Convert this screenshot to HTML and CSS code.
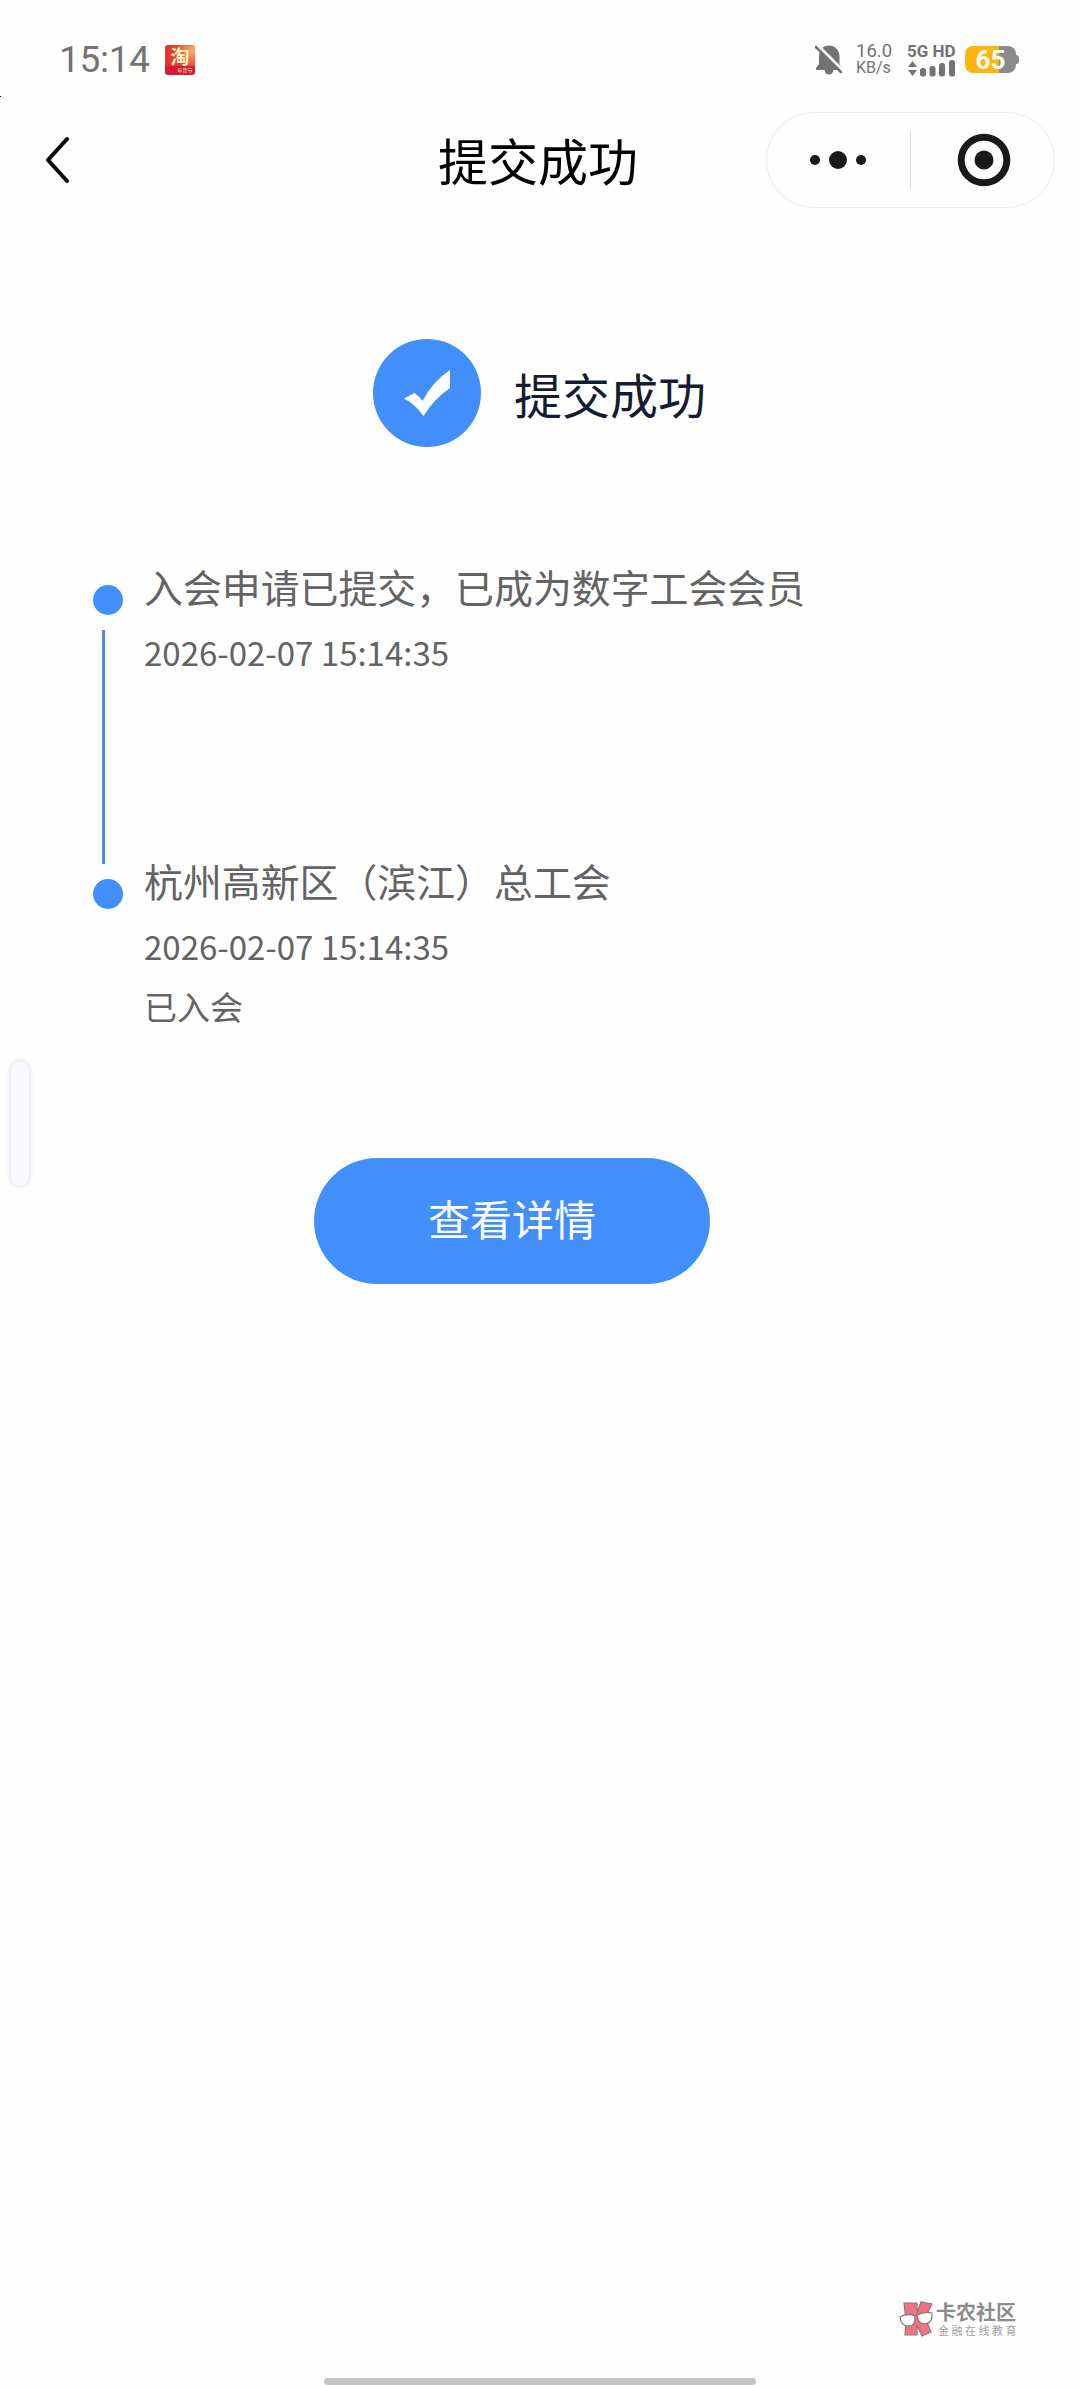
FILE: index.html
```html
<!DOCTYPE html>
<html lang="zh-CN">
<head>
<meta charset="utf-8">
<title>提交成功</title>
<link rel="stylesheet" href="styles.css">
</head>
<body>
<div class="screen">
  <div class="status-bar">
    <span class="clock">15:14</span>
    <div class="app-badge">
      <span class="app-name">淘</span>
      <span class="app-tag">年货节</span>
    </div>
    <div class="indicators">
      <svg class="bell" width="28" height="32" viewBox="0 0 28 32">
        <path d="M4 13C4 6 8 1.500 14 1.500S24.500 6 24.500 13V20L27 25V26H18.500C18 29 16.500 30.500 14 30.500S10 29 9.500 26H1V24L4 20Z" fill="#737373"/>
        <path d="M2 .5L30 28.500" stroke="#fefefe" stroke-width="3"/>
        <path d="M.8 3L26 28.200" stroke="#737373" stroke-width="2.600" stroke-linecap="round"/>
      </svg>
      <div class="speed"><span>16.0</span><span class="unit">KB/s</span></div>
      <div class="network">
        <span>5G HD</span>
        <svg width="48" height="17" viewBox="0 0 48 17" fill="#737373">
          <path d="M1 7L5.500 1L10 7ZM1 10H10L5.500 16Z"/>
          <rect x="13" y="8" width="6" height="8.500" rx="2.500"/>
          <rect x="22.500" y="6" width="6" height="10.500" rx="2.500"/>
          <rect x="32" y="3" width="6" height="13.500" rx="2.500"/>
          <rect x="42" y="0" width="6" height="16.500" rx="2.500"/>
        </svg>
      </div>
      <div class="battery"><span class="level">65</span><span class="nub"></span></div>
    </div>
    <span class="speck"></span>
  </div>

  <header class="nav">
    <svg class="back" width="30" height="50" viewBox="0 0 30 50"><path d="M24 4L5 25L24 46" fill="none" stroke="#000" stroke-width="4" stroke-linejoin="round" stroke-linecap="round"/></svg>
    <h1 class="nav-title">提交成功</h1>
    <div class="capsule">
      <svg class="more" width="60" height="24" viewBox="0 0 60 24" fill="#191919"><circle cx="7" cy="12" r="5"/><circle cx="30" cy="12" r="9"/><circle cx="53" cy="12" r="5"/></svg>
      <span class="divider"></span>
      <svg class="close" width="54" height="54" viewBox="0 0 54 54"><circle cx="27" cy="27" r="22.800" fill="none" stroke="#191919" stroke-width="7"/><circle cx="27" cy="27" r="9.500" fill="#191919"/></svg>
    </div>
  </header>

  <main>
    <section class="result">
      <svg width="108" height="108" viewBox="0 0 108 108"><circle cx="54" cy="54" r="54" fill="#428ffc"/><path d="M31 59.500L41.500 54Q46 57 49.500 62Q60 42 77 31V49Q61 60 50.500 77Q42 65 31 59.500Z" fill="#fff"/></svg>
      <span>提交成功</span>
    </section>

    <ol class="timeline">
      <li class="step">
        <div class="rail"><span class="dot"></span><span class="line"></span></div>
        <div class="info">
          <p class="step-title">入会申请已提交，已成为数字工会会员</p>
          <p class="step-time">2026-02-07 15:14:35</p>
        </div>
      </li>
      <li class="step">
        <div class="rail"><span class="dot"></span></div>
        <div class="info">
          <p class="step-title">杭州高新区（滨江）总工会</p>
          <p class="step-time">2026-02-07 15:14:35</p>
          <p class="step-state">已入会</p>
        </div>
      </li>
    </ol>

    <button class="detail-button" type="button">查看详情</button>
  </main>

  <div class="side-handle"></div>

  <footer class="footer">
    <div class="brand">
      <svg width="35" height="36" viewBox="0 0 35 36" stroke="#8b7776" stroke-width="1.200">
        <path d="M5 2H18V12L22 1L33 3L26 17L32 31L23 35L18 24V34H6L7 20Z" fill="#f0747f"/>
        <path d="M1 16Q8 12 16 15Q17 25 9 25Q2 25 1 16ZM18 14Q26 10 33 12Q34 22 26 23Q19 23 18 14Z" fill="#fff"/>
        <path d="M16 15L18 14" fill="none"/>
      </svg>
      <div class="brand-text"><span class="brand-name">卡农社区</span><span class="brand-sub">金融在线教育</span></div>
    </div>
    <div class="home-bar"></div>
  </footer>
</div>
</body>
</html>
```
FILE: styles.css
```css
* { box-sizing: border-box; }
body {
  margin: 0;
  background: #fefefe;
  font-family: "Noto Sans CJK SC", sans-serif;
}
svg { display: block; flex: none; }
p, h1, ol { margin: 0; padding: 0; }
.screen {
  position: relative;
  display: flex;
  flex-direction: column;
  width: 1080px;
  height: 2388px;
  overflow: hidden;
}

/* System status bar */
.status-bar {
  position: relative;
  display: flex;
  align-items: center;
  height: 112px;
  padding: 7px 61px 0 59px;
  color: #737373;
  font-family: Roboto, sans-serif;
}
.clock {
  width: 106px;
  font-size: 37px;
  line-height: 40px;
  letter-spacing: -.3px;
}
.app-badge {
  display: flex;
  flex-direction: column;
  align-items: center;
  width: 30px;
  height: 30px;
  border-radius: 3px;
  background: linear-gradient(to top, #d51c35 9px, transparent 9px), radial-gradient(circle at 90% 20%, #f7b070, #e8442c 45%, #dc2434);
  font-family: "Noto Sans CJK SC", sans-serif;
  color: #fff0c4;
}
.app-name { font-size: 19px; line-height: 21px; font-weight: 700; }
.app-tag { font-size: 5px; line-height: 8px; padding-left: 10px; white-space: nowrap; }
.indicators {
  display: flex;
  align-items: center;
  height: 34px;
  margin-left: auto;
}
.bell { margin-right: 13px; }
.speed {
  display: flex;
  flex-direction: column;
  width: 51px;
  font-size: 18.500px;
  line-height: 17px;
}
.unit { font-size: 16px; line-height: 16px; }
.network {
  display: flex;
  flex-direction: column;
  gap: 1px;
  width: 58px;
  font-size: 17px;
  line-height: 16px;
  font-weight: 700;
  white-space: nowrap;
}
.battery { display: flex; align-items: center; }
.level {
  width: 51px;
  height: 27px;
  border-radius: 8px;
  background: linear-gradient(to right, #fdb50d 34px, #8a8a8a 34px);
  color: #fff;
  font-size: 26px;
  line-height: 29px;
  font-weight: 700;
  text-align: center;
}
.nub { width: 3px; height: 9px; border-radius: 0 3px 3px 0; background: #8a8a8a; }
.speck { position: absolute; left: 0; top: 96px; width: 1px; height: 1px; background: #000; }

/* Navigation */
.nav {
  display: grid;
  grid-template-columns: 395px 219px 1fr;
  align-items: center;
  height: 96px;
  padding: 0 25px 0 43px;
}
.nav-title {
  padding-bottom: 2px;
  font-size: 50px;
  line-height: 72px;
  font-weight: 400;
  color: #000;
}
.capsule {
  display: flex;
  align-items: center;
  justify-self: end;
  width: 289px;
  height: 96px;
  border: 1.500px solid #ececec;
  border-radius: 48px;
}
.more { margin-left: 41px; }
.divider { width: 1px; height: 58px; margin-left: 42px; background: #dedede; }
.close { margin-left: 46px; }

/* Result heading */
.result {
  display: flex;
  align-items: center;
  gap: 33px;
  margin: 131px 0 0 373px;
  font-size: 48px;
  line-height: 70px;
  color: #141c33;
}

/* Progress timeline */
.timeline { margin: 116px 0 0 93px; list-style: none; }
.step { display: flex; gap: 21px; height: 294px; }
.rail { width: 30px; padding-top: 22px; }
.dot { display: block; width: 30px; height: 30px; border-radius: 50%; background: #428ffc; }
.line { display: block; width: 3px; height: 234px; margin: 15px 0 0 9px; background: #4d8cdd; }
.info { margin-top: -1px; color: #636363; white-space: nowrap; }
.step-title { font-size: 38.900px; line-height: 48px; }
.step-time { margin-top: 18px; font-size: 33px; line-height: 48px; }
.step-state { margin-top: 12px; font-size: 33px; line-height: 48px; }

.detail-button {
  display: block;
  width: 396px;
  height: 126px;
  margin: 7px 0 0 314px;
  padding: 0 0 6px;
  border: 0;
  border-radius: 63px;
  background: #428ffc;
  color: #fff;
  font: 42px/60px "Noto Sans CJK SC", sans-serif;
}

/* Edge panel handle floating over the page */
.side-handle {
  position: absolute;
  left: 11px;
  top: 1061px;
  width: 18px;
  height: 125px;
  border-radius: 9px;
  background: #f8f8fe;
  box-shadow: 0 0 4px 1px #dedee2;
}

.footer { margin-top: auto; padding-bottom: 3px; }
.brand { display: flex; gap: 2px; margin: 0 0 41px 899px; align-items: center; }
.brand-text { display: flex; flex-direction: column; white-space: nowrap; color: #8c8c8c; }
.brand-name { font-size: 20px; line-height: 22px; font-weight: 700; }
.brand-sub { padding-left: 2px; font-size: 11px; line-height: 14px; letter-spacing: 2.500px; color: #a0a0a0; }
.home-bar { width: 432px; height: 7px; margin: 0 auto; border-radius: 4px; background: #c4c4c4; }
```
